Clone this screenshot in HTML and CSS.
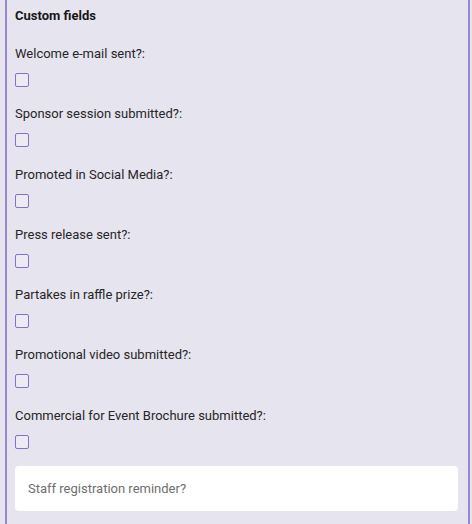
FILE: index.html
```html
<!doctype html>
<html lang="en">
<head>
  <meta charset="UTF-8">
  <title>Custom fields</title>
  <link rel="stylesheet" href="styles.css">
</head>
<body>
<div class="panel">
  <h2 class="panel-title">Custom fields</h2>
  <div class="field">
    <label class="field-label">Welcome e-mail sent?:</label>
    <span class="checkbox"></span>
  </div>
  <div class="field">
    <label class="field-label">Sponsor session submitted?:</label>
    <span class="checkbox"></span>
  </div>
  <div class="field">
    <label class="field-label">Promoted in Social Media?:</label>
    <span class="checkbox"></span>
  </div>
  <div class="field">
    <label class="field-label">Press release sent?:</label>
    <span class="checkbox"></span>
  </div>
  <div class="field">
    <label class="field-label">Partakes in raffle prize?:</label>
    <span class="checkbox"></span>
  </div>
  <div class="field">
    <label class="field-label">Promotional video submitted?:</label>
    <span class="checkbox"></span>
  </div>
  <div class="field">
    <label class="field-label">Commercial for Event Brochure submitted?:</label>
    <span class="checkbox"></span>
  </div>
  <div class="text-input">Staff registration reminder?</div>
</div>
</body>
</html>
```

FILE: styles.css
```css
html, body {
  margin: 0;
  height: 100%;
  background: #e6e4ee;
}

body {
  font-family: Roboto, "Liberation Sans", sans-serif;
  font-size: 13px;
  color: #262626;
}

.panel {
  box-sizing: border-box;
  width: 465px;
  min-height: 100%;
  margin-left: 5px;
  padding: 6px 10px 0 8px;
  border-left: 2px solid #9a86c8;
  border-right: 2px solid #9a86c8;
  display: flex;
  flex-direction: column;
}

.panel-title {
  margin: 0 0 18px;
  font-size: 13px;
  line-height: 20px;
  font-weight: 700;
  color: #161616;
}

.field {
  display: flex;
  flex-direction: column;
  align-items: flex-start;
  gap: 9px;
  margin-bottom: 17.3px;
}

.field:last-of-type {
  margin-bottom: 20px;
}

.field-label {
  line-height: 20px;
}

.checkbox {
  box-sizing: border-box;
  width: 14px;
  height: 14px;
  border: 1px solid #8a70c4;
  border-radius: 2px;
  background: #eceaf2;
}

.text-input {
  height: 45px;
  display: flex;
  align-items: center;
  padding: 0 13px;
  background: #fff;
  border-radius: 4px;
  color: #6f6f6f;
}
```
